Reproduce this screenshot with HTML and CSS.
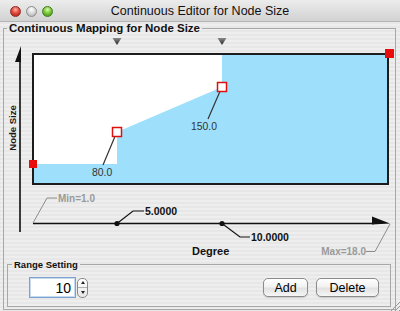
FILE: index.html
```html
<!DOCTYPE html>
<html lang="en">
<head>
    <meta charset="UTF-8">
    <title>Continuous Editor for Node Size</title>
    <link rel="stylesheet" href="styles.css">
</head>
<body>
    <div class="window">
        <div class="titlebar">
            <div class="lights">
                <span class="light red"></span>
                <span class="light gray"></span>
                <span class="light green"></span>
            </div>
            <div class="title">Continuous Editor for Node Size</div>
        </div>

        <div class="content">
            <fieldset class="mapping">
                <legend>Continuous Mapping for Node Size</legend>

                <!-- mapping chart, drawn in window coordinates -->
                <svg class="chart" width="391" height="224" viewBox="4 35 391 224">
                    <defs>
                        <linearGradient id="slider" x1="0" y1="0" x2="0" y2="1">
                            <stop offset="0" stop-color="#8a8a8a"/>
                            <stop offset="1" stop-color="#262626"/>
                        </linearGradient>
                    </defs>

                    <!-- y axis -->
                    <line x1="20" y1="58" x2="20" y2="232" stroke="#3a3a3a" stroke-width="2"/>
                    <polygon points="21,46 21,62 15,62" fill="#111"/>
                    <text class="axis-label" transform="translate(15.5 128) rotate(-90)" text-anchor="middle">Node Size</text>

                    <!-- sliders -->
                    <polygon points="112.5,38 121.5,38 117,45" fill="url(#slider)"/>
                    <polygon points="217.5,38 226.5,38 222,45" fill="url(#slider)"/>

                    <!-- plot area -->
                    <rect x="33" y="54" width="355" height="130" fill="#fff"/>
                    <polygon points="34,164 117,164 117,132 222,87 222,55 387,55 387,183 34,183" fill="#9ee0fb"/>
                    <rect x="33" y="54" width="355" height="130" fill="none" stroke="#1c1c1c" stroke-width="2"/>

                    <!-- handles -->
                    <line x1="116" y1="134" x2="103" y2="165" stroke="#333" stroke-width="1.2"/>
                    <line x1="221" y1="89" x2="208" y2="119" stroke="#333" stroke-width="1.2"/>
                    <rect x="112.5" y="127.5" width="9" height="9" fill="#fff" stroke="#e01010" stroke-width="1.5"/>
                    <rect x="217.5" y="82.5" width="9" height="9" fill="#fff" stroke="#e01010" stroke-width="1.5"/>
                    <rect x="29" y="160" width="8" height="8" fill="#e80c0c"/>
                    <rect x="385" y="49" width="9" height="9" fill="#e80c0c"/>
                    <text class="point-label" x="92" y="175.5">80.0</text>
                    <text class="point-label" x="191" y="129.5">150.0</text>

                    <!-- x axis -->
                    <line x1="33" y1="223.5" x2="374" y2="223.5" stroke="#111" stroke-width="1.6"/>
                    <polygon points="372,216.5 390,223.5 372,224.5" fill="#111"/>

                    <polyline points="33,223 47,198 57,198" fill="none" stroke="#8c8c8c" stroke-width="1"/>
                    <text class="range-label" x="58" y="202">Min=1.0</text>

                    <polyline points="366,251.5 375,251.5 390,224" fill="none" stroke="#8c8c8c" stroke-width="1"/>
                    <text class="range-label" x="366" y="255" text-anchor="end">Max=18.0</text>

                    <circle cx="117" cy="223.5" r="2.6" fill="#111"/>
                    <polyline points="117,223.5 133,211 144,211" fill="none" stroke="#111" stroke-width="1.2"/>
                    <text class="tick-label" x="145" y="214.5">5.0000</text>

                    <circle cx="222" cy="223.5" r="2.6" fill="#111"/>
                    <polyline points="222,223.5 240,237 250,237" fill="none" stroke="#111" stroke-width="1.2"/>
                    <text class="tick-label" x="251" y="241">10.0000</text>

                    <text class="axis-title" x="192" y="255">Degree</text>
                </svg>

                <fieldset class="range">
                    <legend>Range Setting</legend>
                    <div class="range-row">
                        <div class="spinner">
                            <input class="spin-input" type="text" value="10">
                            <div class="stepper">
                                <span class="step-up"></span>
                                <span class="step-down"></span>
                            </div>
                        </div>
                        <div class="buttons">
                            <button class="btn">Add</button>
                            <button class="btn">Delete</button>
                        </div>
                    </div>
                </fieldset>
            </fieldset>
        </div>

        <svg class="grip" width="12" height="12" viewBox="0 0 12 12">
            <line x1="3" y1="12" x2="12" y2="3" stroke="#9a9a9a"/>
            <line x1="7" y1="12" x2="12" y2="7" stroke="#9a9a9a"/>
            <line x1="11" y1="12" x2="12" y2="11" stroke="#9a9a9a"/>
        </svg>
    </div>
</body>
</html>
```

FILE: styles.css
```css
/* Base */
body {
    margin: 0;
    font-family: "Liberation Sans", Arial, sans-serif;
    background: #ececec;
}

.window {
    position: relative;
    width: 400px;
    height: 311px;
    overflow: hidden;
    background: repeating-linear-gradient(#eeeeee 0 2px, #e7e7e7 2px 4px);
}

/* Title bar */
.titlebar {
    height: 22px;
    box-sizing: border-box;
    display: grid;
    grid-template-columns: 1fr auto 1fr;
    align-items: center;
    background: linear-gradient(#ececec, #d2d2d2);
    border-bottom: 1px solid #b4b4b4;
}

.lights {
    display: flex;
    gap: 5px;
    padding-left: 10px;
}

.light {
    width: 11px;
    height: 11px;
    border-radius: 50%;
    box-sizing: border-box;
}

.red {
    background: radial-gradient(circle at 50% 30%, #ffb0a8 0, #e24a3e 45%, #a8160e 100%);
    border: 1px solid #8e2a22;
}

.gray {
    background: radial-gradient(circle at 50% 30%, #ffffff 0, #d6d6d6 50%, #a9a9a9 100%);
    border: 1px solid #8d8d8d;
}

.green {
    background: radial-gradient(circle at 50% 30%, #d8ffb0 0, #7cc83a 45%, #3a8a12 100%);
    border: 1px solid #3f7a22;
}

.title {
    font-size: 12.5px;
    line-height: 22px;
    color: #111;
}

/* Mapping panel */
.mapping {
    margin: 0 4px 0 3px;
    padding: 0;
    min-width: 0;
    border: 1px solid #a8a8a8;
}

.mapping > legend {
    margin-left: 3px;
    padding: 0 2px;
    font-size: 11.5px;
    font-weight: bold;
    line-height: 13px;
    color: #111;
}

.chart {
    display: block;
}

.axis-label {
    font-size: 9.5px;
    font-weight: bold;
    fill: #1a1a1a;
}

.axis-title {
    font-size: 11px;
    font-weight: bold;
    fill: #111;
}

.point-label {
    font-size: 10.4px;
    fill: #333;
}

.tick-label {
    font-size: 10.5px;
    font-weight: bold;
    fill: #111;
}

.range-label {
    font-size: 10px;
    font-weight: bold;
    fill: #9a9a9a;
}

/* Range setting */
.range {
    margin: 0 4px 2px 3px;
    padding: 7px 11px 8px 0;
    min-width: 0;
    border: 1px solid #a8a8a8;
}

.range > legend {
    margin-left: 4px;
    padding: 0 2px;
    font-size: 9.5px;
    font-weight: bold;
    line-height: 11px;
    color: #111;
}

.range-row {
    display: flex;
    align-items: center;
    justify-content: space-between;
    height: 21px;
    padding-left: 21px;
}

.spinner {
    display: flex;
    align-items: center;
    gap: 1px;
}

.spin-input {
    width: 47px;
    height: 21px;
    box-sizing: border-box;
    margin: 0;
    padding: 0 4px 0 0;
    border: 1px solid #7da2cf;
    box-shadow: 0 0 0 1px #c5d9ef inset;
    font-family: "Liberation Sans", Arial, sans-serif;
    font-size: 14px;
    text-align: right;
    color: #000;
    background: #fff;
    outline: none;
}

.stepper {
    width: 11px;
    height: 20px;
    box-sizing: border-box;
    display: flex;
    flex-direction: column;
    border: 1px solid #8a8a8a;
    border-radius: 5px;
    background: linear-gradient(#ffffff, #e6e6e6);
}

.step-up,
.step-down {
    flex: 1;
    display: flex;
    align-items: center;
    justify-content: center;
}

.step-up {
    border-bottom: 1px solid #b0b0b0;
}

.step-up::after,
.step-down::after {
    content: "";
    border-left: 2px solid transparent;
    border-right: 2px solid transparent;
}

.step-up::after {
    border-bottom: 3px solid #222;
}

.step-down::after {
    border-top: 3px solid #222;
}

.buttons {
    display: flex;
    gap: 8px;
}

.btn {
    height: 19px;
    padding: 0;
    border: 1px solid #8c8c8c;
    border-radius: 5px;
    background: linear-gradient(#ffffff 0, #f2f2f2 45%, #e2e2e2 55%, #f6f6f6 100%);
    box-shadow: 0 1px 1px rgba(0,0,0,0.15);
    font-family: "Liberation Sans", Arial, sans-serif;
    font-size: 12.5px;
    color: #000;
}

.btn:first-child {
    width: 45px;
}

.btn:last-child {
    width: 63px;
}

.grip {
    position: absolute;
    right: 0;
    bottom: 0;
}
```
